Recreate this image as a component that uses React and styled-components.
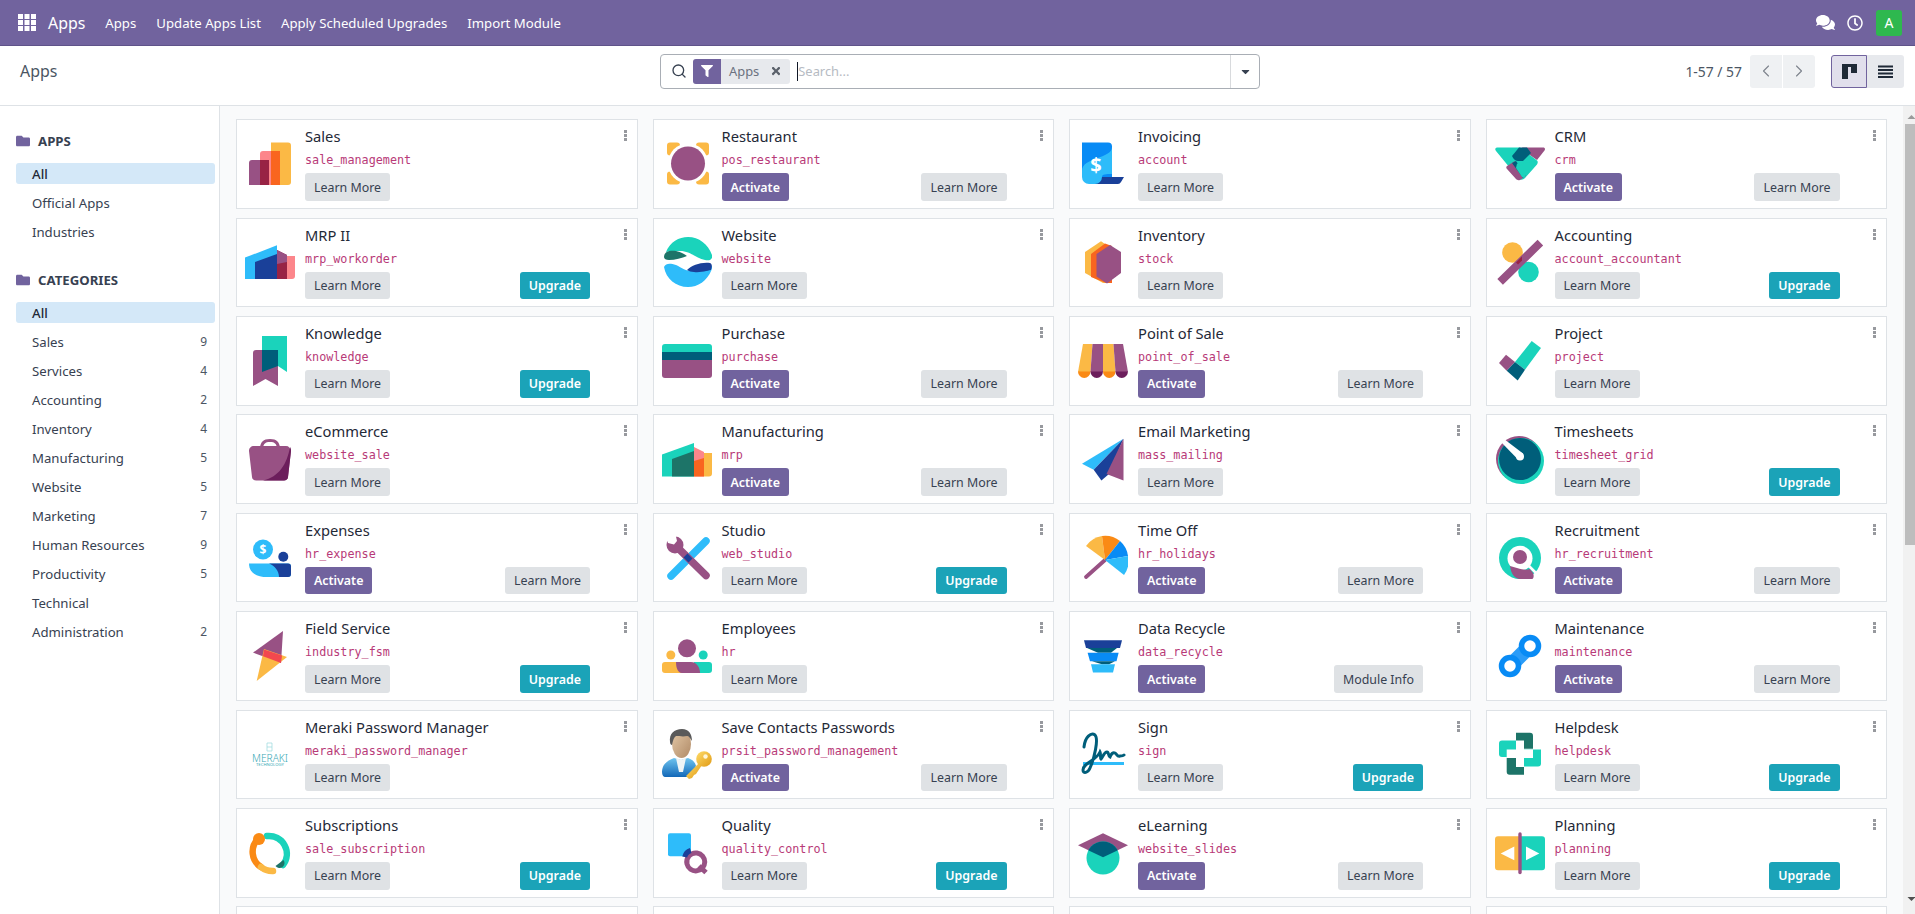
import React from "react";
import styled, { createGlobalStyle } from "styled-components";
import { FaComments, FaRegClock, FaFilter, FaTimes, FaFolder, FaCaretDown } from "react-icons/fa";
import { ChevronLeft, ChevronRight, Search } from "lucide-react";

const C = {
  purple: "#985184",
  teal: "#1ad3bb",
  yellow: "#fbb945",
  orange: "#fa8a15",
  redorange: "#f9651f",
  pink: "#fc868b",
  wine: "#982344",
  sky: "#2ebcfa",
  blue: "#088bf5",
  navy: "#1a4099",
  deep: "#005e7a",
  moss: "#1d7468",
  plum: "#6c1e5c",
};

const Global = createGlobalStyle`
  * { box-sizing: border-box; }
  html, body { margin: 0; height: 100%; overflow: hidden; }
  body { font-family: "Noto Sans", sans-serif; font-size: 13.2px; color: #374151; background: #fff; }
`;

const Page = styled.div`
  display: flex;
  flex-direction: column;
  height: 100vh;
`;

const Navbar = styled.header`
  flex: 0 0 46px;
  display: flex;
  align-items: center;
  background: #71639e;
  border-bottom: 1px solid #5f5389;
  color: #fff;
  padding: 0 13px 0 18px;
`;

const AppsGrid = styled.svg`
  width: 18px;
  height: 17px;
  margin-right: 12px;
  fill: #fff;
`;

const Brand = styled.span`
  font-size: 15.9px;
  margin-right: 20px;
`;

const NavMenu = styled.nav`
  display: flex;
  gap: 20px;
`;

const NavLink = styled.span`
  font-size: 13.2px;
  color: #fff;
`;

const NavRight = styled.div`
  margin-left: auto;
  display: flex;
  align-items: center;
`;

const NavIcon = styled.span`
  display: flex;
  color: #fff;
  margin-right: ${(p) => p.$gap}px;
  font-size: ${(p) => p.$size}px;
`;

const Avatar = styled.span`
  width: 26px;
  height: 26px;
  border-radius: 3px;
  background: #2eb84f;
  color: #fff;
  font-size: 14px;
  display: flex;
  align-items: center;
  justify-content: center;
`;

const ControlPanel = styled.div`
  flex: 0 0 60px;
  display: grid;
  grid-template-columns: 660px 600px 1fr;
  align-items: center;
  background: #fff;
  border-bottom: 1px solid #dee2e6;
  padding: 0 11px 9px 0;
`;

const PageTitle = styled.h1`
  margin: 0 0 0 20px;
  font-size: 15.9px;
  font-weight: 400;
  color: #4b5563;
`;

const SearchBox = styled.div`
  height: 35px;
  display: flex;
  align-items: center;
  border: 1px solid #a9aeb5;
  border-radius: 4px;
  padding-left: 10px;
  color: #374151;
`;

const Facet = styled.div`
  display: flex;
  height: 25px;
  margin-left: 6px;
  border-radius: 3px;
  background: #e7e9ed;
  overflow: hidden;
`;

const FacetIcon = styled.span`
  width: 28px;
  background: #71639e;
  color: #fff;
  font-size: 12px;
  display: flex;
  align-items: center;
  justify-content: center;
`;

const FacetLabel = styled.span`
  display: flex;
  align-items: center;
  gap: 11px;
  padding: 0 8px 0 8px;
  color: #6b7280;
  font-size: 12.9px;
  & svg { font-size: 12px; color: #5b616b; }
`;

const Caret = styled.span`
  width: 1px;
  height: 19px;
  background: #111827;
  margin-left: 7px;
`;

const SearchInput = styled.input`
  flex: 1;
  min-width: 0;
  border: 0;
  outline: 0;
  background: transparent;
  font: 12.9px "Noto Sans", sans-serif;
  padding: 0;
  &::placeholder { color: #b6bbc3; opacity: 1; }
`;

const SearchCaret = styled.button`
  width: 29px;
  height: 100%;
  padding: 0;
  border: 0;
  border-left: 1px solid #d8dadd;
  background: transparent;
  color: #374151;
  font-size: 13px;
  display: flex;
  align-items: center;
  justify-content: center;
`;

const CpRight = styled.div`
  display: flex;
  align-items: center;
  justify-content: flex-end;
`;

const PagerText = styled.span`
  font-size: 13.9px;
  color: #4b5563;
  margin-right: 8px;
`;

const PagerGroup = styled.div`
  display: flex;
  gap: 1px;
  margin-right: 16px;
`;

const PagerButton = styled.button`
  width: 32px;
  height: 33px;
  padding: 0;
  border: 0;
  border-radius: ${(p) => (p.$end ? "0 3px 3px 0" : "3px 0 0 3px")};
  background: #eff1f3;
  color: #7c828c;
  display: flex;
  align-items: center;
  justify-content: center;
`;

const ViewButton = styled.button`
  width: ${(p) => (p.$active ? 36 : 37)}px;
  height: 33px;
  padding: 0;
  border: ${(p) => (p.$active ? "1px solid #71639e" : "0")};
  border-radius: ${(p) => (p.$active ? "3px 0 0 3px" : "0 3px 3px 0")};
  background: ${(p) => (p.$active ? "#e1dfec" : "#e7e9ed")};
  display: flex;
  align-items: center;
  justify-content: center;
`;

const GlyphSvg = styled.svg`
  width: 15px;
  height: 15px;
  fill: #1f2937;
`;

const Body = styled.div`
  flex: 1;
  min-height: 0;
  display: flex;
`;

const Sidebar = styled.aside`
  flex: 0 0 220px;
  background: #fff;
  border-right: 1px solid #dee2e6;
  padding: 25px 4px 0 16px;
`;

const SideHeader = styled.div`
  display: flex;
  align-items: center;
  gap: 8px;
  height: 20px;
  margin-bottom: 12px;
  font-size: 13.2px;
  font-weight: 700;
  color: #374151;
  & svg { color: #71639e; font-size: 14px; }
`;

const SideList = styled.ul`
  list-style: none;
  margin: 0 0 ${(p) => p.$after || 0}px;
  padding: 0;
  display: flex;
  flex-direction: column;
  gap: 8px;
`;

const SideItem = styled.li`
  height: 21px;
  padding: 0 8px 0 16px;
  display: flex;
  align-items: center;
  justify-content: space-between;
  border-radius: 3px;
  font-size: 13.2px;
  font-weight: ${(p) => (p.$active ? 500 : 400)};
  color: ${(p) => (p.$active ? "#1f2937" : "#374151")};
  background: ${(p) => (p.$active ? "#d4e8f8" : "transparent")};
`;

const Count = styled.span`
  font-size: 12px;
  color: #4b5563;
`;

const Main = styled.main`
  flex: 1;
  min-width: 0;
  overflow: hidden;
  background: #f9fafb;
  padding: 13.3px 16px 0;
`;

const ScrollRail = styled.div`
  flex: 0 0 12px;
  display: flex;
  flex-direction: column;
  background: #f1f1f1;
  padding-left: 2px;
`;

const ScrollArrow = styled.svg`
  flex: 0 0 18px;
  width: 10px;
  height: 18px;
  margin-top: ${(p) => (p.$bottom ? "auto" : 0)};
  fill: ${(p) => (p.$bottom ? "#505050" : "#9a9a9a")};
`;

const ScrollThumb = styled.div`
  height: 421px;
  background: #bdbdbd;
`;

const Grid = styled.div`
  display: grid;
  grid-template-columns: repeat(4, 1fr);
  column-gap: 15px;
  row-gap: 8.9px;
  grid-auto-rows: 89.5px;
`;

const Card = styled.article`
  position: relative;
  display: flex;
  align-items: center;
  background: #fff;
  border: 1px solid #dee2e6;
  padding-left: 8px;
`;

const Logo = styled.svg`
  flex: 0 0 50px;
  width: 50px;
  height: 50px;
  margin-right: 10px;
`;

const CardText = styled.div`
  align-self: flex-start;
  padding-top: 6px;
  width: 285px;
`;

const CardTitle = styled.div`
  font-size: 14.7px;
  line-height: 20px;
  color: #1f2937;
  white-space: nowrap;
`;

const ModuleCode = styled.code`
  display: block;
  margin-top: 5px;
  font-family: "DejaVu Sans Mono", monospace;
  font-size: 11.75px;
  line-height: 18px;
  color: #b83a78;
  white-space: nowrap;
`;

const Buttons = styled.div`
  display: flex;
  justify-content: space-between;
  margin-top: 4px;
`;

const variantBg = { primary: "#71639e", upgrade: "#1ba3b8", secondary: "#dfe2e5" };

const Btn = styled.button`
  height: 27.5px;
  padding: 0 9px;
  border: 0;
  border-radius: 3px;
  font: ${(p) => (p.$variant === "secondary" ? 400 : 600)} 12.4px "Noto Sans", sans-serif;
  color: ${(p) => (p.$variant === "secondary" ? "#374151" : "#fff")};
  background: ${(p) => variantBg[p.$variant]};
`;

const Kebab = styled.span`
  position: absolute;
  top: 10px;
  right: 10px;
  width: 3px;
  height: 11px;
  background-image: radial-gradient(circle at 1.5px 1.5px, #97999e 1.5px, transparent 1.6px);
  background-size: 3px 4px;
`;

/* App icons */
const Sales = () => (
  <Logo viewBox="0 0 50 50">
    <path d="M4 24a3 3 0 013-3h17v25H4z" fill={C.purple} />
    <path d="M15 15a3 3 0 013-3h17v34H15z" fill={C.pink} />
    <path d="M15 21h9v25h-9z" fill={C.wine} />
    <path d="M26 3.5h17a3 3 0 013 3V43a3 3 0 01-3 3H26z" fill={C.yellow} />
    <path d="M26 12h9v34h-9z" fill={C.redorange} />
  </Logo>
);
const Restaurant = () => (
  <Logo viewBox="0 0 50 50">
    <rect x="5" y="3.5" width="13" height="13" rx="3" fill={C.yellow} />
    <rect x="34" y="3.5" width="13" height="13" rx="3" fill={C.yellow} />
    <rect x="5" y="32.500" width="13" height="13" rx="3" fill={C.yellow} />
    <rect x="34" y="32.500" width="13" height="13" rx="3" fill={C.yellow} />
    <circle cx="26" cy="24.5" r="20" fill="#fff" />
    <circle cx="26" cy="24.5" r="17" fill={C.purple} />
  </Logo>
);
const Invoicing = () => (
  <Logo viewBox="0 0 50 50">
    <path d="M12 38h34l-3 5a4 4 0 01-3 2H12z" fill={C.navy} />
    <path d="M4 3.5h26a4 4 0 014 4V38H4z" fill={C.blue} />
    <path d="M34 8c0 12-30 10-30 24v6a7 7 0 007 7h6a7 7 0 007-7c0-3 4-3 10-3z" fill={C.sky} />
    <text x="18" y="33" textAnchor="middle" fontFamily="Noto Sans" fontWeight="700" fontSize="20" fill="#fff">$</text>
  </Logo>
);
const Crm = () => (
  <Logo viewBox="0 0 50 50">
    <path d="M27 8.5h21c2 0 2.5 1.5 1.5 3L42 21 29 12z" fill={C.purple} />
    <path d="M2 8.5h23l17 13c1 1 1 2 0 4L30 39c-2 2-4 2-6 1L1 12c-1.5-1.500-.5-3.500 1-3.500z" fill={C.teal} />
    <path d="M24 8.500h8L36 14 28 22l-5 0c-2 0-5-2-6-5z" fill={C.deep} />
    <path d="M12 27l8-5 11 15-6 4c-2 .5-3 0-4-1l-9-10c-1-1-1-2 0-3z" fill={C.purple} />
    <path d="M17 24l4-2 10 14-3 3z" fill={C.deep} />
    <path d="M22 24.500h5l14-2.500-12 17-2-1-6-9z" fill={C.teal} />
  </Logo>
);
const MrpII = () => (
  <Logo viewBox="0 0 50 50">
    <path d="M0 20.600L32 8.300V42H0z" fill={C.sky} />
    <path d="M10 25L32 17V42H10z" fill={C.navy} />
    <path d="M32 13l10 5v24H32z" fill={C.wine} />
    <path d="M32 13l10 5v7l-10 2z" fill={C.purple} />
    <path d="M42 19l8 0v20a3 3 0 01-3 3h-5z" fill={C.pink} />
  </Logo>
);
const Website = () => (
  <Logo viewBox="0 0 50 50">
    <path d="M4 15C8 5 17 0 26 0c11 0 20 7 24 18 1 4-2 6-7 5-9-2-15-9-25-9-6 0-11 0-14 1z" fill={C.teal} />
    <path d="M2 20c0-5 5-7 12-6 5 1 10 4 11 5-5 2-12 4-18 4-3 0-5-1-5-3z" fill={C.moss} />
    <path d="M2 30c2-4 6-4 12-2 6 3 10 6 16 6 7-1 14-5 18-6 2 0 2.500 2 1.500 5C45 44 36 50 26 50 14 50 4 42 2 30z" fill={C.sky} />
    <path d="M25 33c5-5 14-8 23-7 2.500 1 2 4 1 7-1 0-10 3-17 2-3 0-5-1-7-2z" fill={C.navy} />
  </Logo>
);
const Inventory = () => (
  <Logo viewBox="0 0 50 50">
    <path d="M7 15L23 4.300 30 9v37h-5L7 36z" fill={C.yellow} />
    <path d="M13 17L27 6.500 34 9v37h-6L13 40z" fill={C.redorange} />
    <path d="M18.500 17L32 8l11 7v21l-14 10.500-10.500-7z" fill={C.purple} />
  </Logo>
);
const Accounting = () => (
  <Logo viewBox="0 0 50 50">
    <circle cx="17.500" cy="15.500" r="10.300" fill={C.yellow} />
    <circle cx="33.500" cy="35" r="10.300" fill={C.teal} />
    <path d="M42.500 8.500L8 42" stroke={C.purple} strokeWidth="8" strokeLinecap="square" />
    <path d="M21 25.500l6-6 0 4-4 4z" fill={C.wine} />
  </Logo>
);
const Knowledge = () => (
  <Logo viewBox="0 0 50 50">
    <path d="M17 0h25v36l-9-6-16 6z" fill={C.teal} />
    <path d="M8 17a3 3 0 013-3h22v36l-12.500-7L8 50z" fill={C.purple} />
    <path d="M17 14h16v16l-16 6z" fill={C.deep} />
  </Logo>
);
const Purchase = () => (
  <Logo viewBox="0 0 50 50">
    <path d="M0 11a3 3 0 013-3h44a3 3 0 013 3v5H0z" fill={C.teal} />
    <path d="M0 16h50v8H0z" fill={C.deep} />
    <path d="M0 24h50v15a3 3 0 01-3 3H3a3 3 0 01-3-3z" fill={C.purple} />
  </Logo>
);
const PointOfSale = () => (
  <Logo viewBox="0 0 50 50">
    <path d="M5 8h9.500L12.500 36H0z" fill={C.yellow} />
    <path d="M14.500 8H25v28H12.500z" fill={C.purple} />
    <path d="M25 8h10.500l2 28H25z" fill={C.yellow} />
    <path d="M35.500 8H45l5 28H37.500z" fill={C.purple} />
    <path d="M0 35.500h12.500a6.250 6.500 0 01-12.500 0z" fill={C.orange} />
    <path d="M12.500 35.500H25a6.250 6.500 0 01-12.500 0z" fill={C.plum} />
    <path d="M25 35.500h12.500a6.250 6.500 0 01-12.500 0z" fill={C.orange} />
    <path d="M37.500 35.500H50a6.250 6.500 0 01-12.500 0z" fill={C.plum} />
  </Logo>
);
const Project = () => (
  <Logo viewBox="0 0 50 50">
    <path d="M36.700 5L46 12 30 33.700 20 26z" fill={C.teal} />
    <path d="M4 27l7-8.300L20 26l-8.300 8.700z" fill={C.purple} />
    <path d="M20 26l10 7.700-7.300 10.700-11-9.700z" fill={C.deep} />
  </Logo>
);
const ECommerce = () => (
  <Logo viewBox="0 0 50 50">
    <path d="M15 13c1-5 3-8 10-8s9 3 10 8h-3c-1-3-2-5-7-5s-6 2-7 5z" fill={C.purple} />
    <path d="M9 12h32c3 0 4 2 5 5l-3 26c0 2-2 3.500-4 3.500H11c-2 0-4-1.500-4-3.500L4 17c0-3 2-5 5-5z" fill={C.purple} />
    <path d="M45 13c1 1 1 3 1 4l-3 26c0 2-2 3.500-4 3.500H18C34 43 42 30 45 13z" fill={C.plum} />
  </Logo>
);
const Manufacturing = () => (
  <Logo viewBox="0 0 50 50">
    <path d="M0 20.500L32 9v33.400H0z" fill={C.teal} />
    <path d="M10 25L32 17v25.400H10z" fill={C.moss} />
    <path d="M32 13l10 5v24.400H32z" fill={C.pink} />
    <path d="M32 27l10-3v18.400H32z" fill={C.redorange} />
    <path d="M42 19h8v20.400a3 3 0 01-3 3h-5z" fill={C.yellow} />
  </Logo>
);
const EmailMarketing = () => (
  <Logo viewBox="0 0 50 50">
    <path d="M45.500 4.700L4 29.700l11.700 6z" fill={C.sky} />
    <path d="M45.500 4.700L15.700 35.700l7.700 10.700 7-6z" fill={C.navy} />
    <path d="M45.500 4.700L28.500 40l17 6.400z" fill={C.purple} />
  </Logo>
);
const Timesheets = () => (
  <Logo viewBox="0 0 50 50">
    <circle cx="24" cy="25" r="23" fill={C.purple} />
    <circle cx="26" cy="27" r="23" fill={C.teal} />
    <circle cx="25" cy="25" r="21" fill={C.deep} />
    <path d="M6 8l3-3 19 14.500-5 6z" fill="#fff" />
    <circle cx="25" cy="22.500" r="4" fill="#fff" />
  </Logo>
);
const Expenses = () => (
  <Logo viewBox="0 0 50 50">
    <circle cx="18" cy="16.500" r="10" fill={C.sky} />
    <text x="18" y="21" textAnchor="middle" fontFamily="Noto Sans" fontWeight="700" fontSize="12" fill="#fff">$</text>
    <circle cx="38.300" cy="23.700" r="5" fill={C.navy} />
    <path d="M4 30.500h39a3 3 0 013 3V41a3 3 0 01-3 3H22C12 44 4 40 4 30.500z" fill={C.sky} />
    <path d="M24 30.500h19a3 3 0 013 3V41a3 3 0 01-3 3h-9c0-6-4-11-10-13.500z" fill={C.navy} />
  </Logo>
);
const Studio = () => (
  <Logo viewBox="0 0 50 50">
    <path d="M44 8L9 43" stroke={C.sky} strokeWidth="7.500" strokeLinecap="round" />
    <path d="M15 14L44 42.500" stroke={C.purple} strokeWidth="7.500" strokeLinecap="round" />
    <circle cx="13" cy="12" r="8.500" fill={C.purple} />
    <path d="M3 1.500h10.500L15 8l-3 3.500L6 10z" fill="#fff" />
    <path d="M21.500 24.500l4-4 5 5-4 4z" fill={C.navy} />
  </Logo>
);
const TimeOff = () => (
  <Logo viewBox="0 0 50 50">
    <path d="M27 27L8 44" stroke={C.purple} strokeWidth="3.800" strokeLinecap="round" />
    <path d="M8 13a24 24 0 0116-10l3 24z" fill={C.yellow} />
    <path d="M24 3a24 24 0 0118 5L27 27z" fill={C.orange} />
    <path d="M42 8a24 24 0 018 15L27 27z" fill={C.blue} />
    <path d="M50 23a24 24 0 01-4 19L27 27z" fill={C.sky} />
  </Logo>
);
const Recruitment = () => (
  <Logo viewBox="0 0 50 50">
    <circle cx="25" cy="25" r="21" fill={C.teal} />
    <circle cx="25" cy="25.300" r="12.500" fill="#fff" />
    <circle cx="25" cy="24" r="7" fill={C.purple} />
    <path d="M15 33l7 2c6 2 10 2 13 1l3 4c1 2 1 6-1 6H25c-5 0-9-5-10-13z" fill={C.purple} />
    <path d="M34 33l8 8" stroke="#fff" strokeWidth="2.500" />
  </Logo>
);
const FieldService = () => (
  <Logo viewBox="0 0 50 50">
    <path d="M38 0L8 21.600 36 32z" fill={C.purple} />
    <path d="M42 26L19 18 11.700 50z" fill={C.yellow} />
    <path d="M19 18.500l18 6-1 7.500-18-6.700z" fill="#f2484f" />
  </Logo>
);
const Employees = () => (
  <Logo viewBox="0 0 50 50">
    <circle cx="25" cy="17.300" r="9" fill={C.purple} />
    <circle cx="8.800" cy="24" r="4.500" fill={C.yellow} />
    <circle cx="41.200" cy="24" r="4.500" fill={C.teal} />
    <path d="M3 31h15l8 11H3a3 3 0 01-3-3v-5a3 3 0 013-3z" fill={C.yellow} />
    <path d="M32 31h15a3 3 0 013 3v5a3 3 0 01-3 3H28z" fill={C.teal} />
    <path d="M14 31h15c6 0 9 6 9 11H20c-5 0-6-7-6-11z" fill={C.purple} />
  </Logo>
);
const DataRecycle = () => (
  <Logo viewBox="0 0 50 50">
    <path d="M6 9.300h38l-2 7.700H8z" fill={C.navy} />
    <path d="M9 17h30l-6 4.700H20z" fill={C.deep} />
    <path d="M9.600 21.700h31L38.500 30.300H12z" fill={C.blue} />
    <path d="M14 30.300h23l-6 3H24z" fill={C.deep} />
    <path d="M13 33.300h24l-2 8.300H15z" fill={C.sky} />
  </Logo>
);
const Maintenance = () => (
  <Logo viewBox="0 0 50 50">
    <path d="M29 13l8 8-16 16-8-8z" fill={C.sky} />
    <path d="M14.500 25L25 14.500l10.500 10.500L25 35.500z" fill="#2a9cf8" />
    <circle cx="35" cy="15" r="8.500" fill="#fff" stroke={C.blue} strokeWidth="5.500" />
    <circle cx="15" cy="35" r="8.500" fill="#fff" stroke={C.blue} strokeWidth="5.500" />
  </Logo>
);
const Meraki = () => (
  <Logo viewBox="0 0 50 50">
    <path d="M22 14h5v8h-5zM22 18h5" fill="none" stroke="#9ad9dc" strokeWidth=".7" />
    <text x="25" y="33" textAnchor="middle" fontFamily="Noto Sans" fontSize="10.500" fontWeight="300" fill="#39a9b5" textLength="36" lengthAdjust="spacingAndGlyphs">MERAKI</text>
    <text x="25" y="37" textAnchor="middle" fontFamily="Noto Sans" fontSize="3" fill="#39a9b5" textLength="28" lengthAdjust="spacingAndGlyphs">TECHNOLOGY</text>
  </Logo>
);
const SaveContacts = () => (
  <Logo viewBox="0 0 50 50">
    <defs>
      <linearGradient id="shirt" x1="0" y1="0" x2="0" y2="1">
        <stop offset="0" stopColor="#6fc4ef" />
        <stop offset="1" stopColor="#1268b8" />
      </linearGradient>
      <linearGradient id="face" x1="0" y1="0" x2="1" y2="1">
        <stop offset="0" stopColor="#e4c9a8" />
        <stop offset="1" stopColor="#b08a66" />
      </linearGradient>
      <linearGradient id="gold" x1="0" y1="0" x2="1" y2="1">
        <stop offset="0" stopColor="#ffdc6a" />
        <stop offset="1" stopColor="#e09a14" />
      </linearGradient>
    </defs>
    <path d="M0 44c0-9 5-12 12-15l7 2 7-2c5 2 7 4 8 8l-6 11H4c-3 0-4-2-4-6z" fill="url(#shirt)" />
    <path d="M14 29l5 2 5-2-3 14h-4z" fill="#eef4f6" />
    <ellipse cx="19.500" cy="15" rx="9.500" ry="14" fill="url(#face)" />
    <path d="M8 13C7 5 12 0 20 0c7 0 10 5 10 12-2-3-3-5-5-5-4 1-8 0-11 0-2 1-3 4-4 9-1 0-2-1-2-3z" fill="#5a5a5a" />
    <path d="M37 34L24 47l3 3 3-1 2-3 2-1 6-9z" fill="url(#gold)" />
    <circle cx="42" cy="30" r="7.800" fill="url(#gold)" />
    <circle cx="43.500" cy="27.500" r="2.200" fill="#fff6d8" />
  </Logo>
);
const Sign = () => (
  <Logo viewBox="0 0 50 50">
    <path d="M5 33h41v3H5z" fill={C.sky} />
    <path d="M6 18C7 8 13 3 17 6c4 4-1 24-5 33-2 5-7 6-7 2 0-7 13-9 17-18 1 2 0 6 1 7 2-2 3-7 6-7 2 0 1 4 3 5 1-3 3-5 5-4 2 1 2 4 5 3 1 0 3 0 4-1" fill="none" stroke={C.deep} strokeWidth="3" strokeLinecap="round" />
  </Logo>
);
const Helpdesk = () => (
  <Logo viewBox="0 0 50 50">
    <path d="M21 3.700h14a3 3 0 013 3V19.700H21z" fill={C.moss} />
    <path d="M11.700 28.700H29v17H14.700a3 3 0 01-3-3z" fill={C.moss} />
    <path d="M7 11.400h14V28H7a3 3 0 01-3-3V14.400a3 3 0 013-3z" fill={C.teal} />
    <path d="M29 20.400h17V34.400a3 3 0 01-3 3H29z" fill={C.teal} />
    <path d="M21 11.500h8v9h9v8.500h-9v9h-8v-9h-9.300v-8.500H21z" fill="#fff" />
  </Logo>
);
const Subscriptions = () => (
  <Logo viewBox="0 0 50 50">
    <path d="M22 8A18 18 0 0138 37" fill="none" stroke={C.teal} strokeWidth="6.500" strokeLinecap="round" />
    <path d="M38.500 32a5 5 0 11-8 6z" fill={C.moss} />
    <path d="M13 11A18 18 0 0016 39" fill="none" stroke={C.orange} strokeWidth="6.500" strokeLinecap="round" />
    <circle cx="14" cy="11" r="6" fill={C.orange} />
    <path d="M16 39a18 18 0 0012 4" fill="none" stroke={C.yellow} strokeWidth="6.500" strokeLinecap="round" />
  </Logo>
);
const Quality = () => (
  <Logo viewBox="0 0 50 50">
    <rect x="6" y="5.300" width="23" height="23" rx="2" fill={C.sky} />
    <path d="M37 38l7 6.500" stroke={C.purple} strokeWidth="5" />
    <path d="M25 36a9 9 0 0110-11 9 9 0 11-10 11z" fill="none" stroke={C.purple} strokeWidth="5" />
    <path d="M22.700 29a9 9 0 016-6.500" fill="none" stroke={C.navy} strokeWidth="5" />
  </Logo>
);
const ELearning = () => (
  <Logo viewBox="0 0 50 50">
    <defs>
      <clipPath id="capClip"><ellipse cx="25" cy="30" rx="16.500" ry="16.500" /></clipPath>
    </defs>
    <path d="M25 5.300L50 17.300 25 29.300 0 17.300z" fill={C.purple} />
    <ellipse cx="25" cy="30" rx="16.500" ry="16.500" fill={C.teal} />
    <path d="M25 5.300L50 17.300 25 29.300 0 17.300z" fill={C.deep} clipPath="url(#capClip)" />
  </Logo>
);
const Planning = () => (
  <Logo viewBox="0 0 50 50">
    <path d="M3 8.300h21v34H3a3 3 0 01-3-3v-28a3 3 0 013-3z" fill={C.yellow} />
    <path d="M26 8.300h21a3 3 0 013 3v28a3 3 0 01-3 3H26z" fill={C.teal} />
    <path d="M19.300 18.600v13.700L5.700 25.400z" fill="#fff" />
    <path d="M31 18.600v13.700l13.300-6.900z" fill="#fff" />
    <rect x="23.300" y="4.300" width="3.400" height="42" rx="1.700" fill={C.purple} />
  </Logo>
);

const A = { label: "Activate", variant: "primary" };
const U = { label: "Upgrade", variant: "upgrade" };
const S = { label: "Learn More", variant: "secondary" };
const M = { label: "Module Info", variant: "secondary" };

const apps = [
  ["Sales", "sale_management", Sales, [S]],
  ["Restaurant", "pos_restaurant", Restaurant, [A, S]],
  ["Invoicing", "account", Invoicing, [S]],
  ["CRM", "crm", Crm, [A, S]],
  ["MRP II", "mrp_workorder", MrpII, [S, U]],
  ["Website", "website", Website, [S]],
  ["Inventory", "stock", Inventory, [S]],
  ["Accounting", "account_accountant", Accounting, [S, U]],
  ["Knowledge", "knowledge", Knowledge, [S, U]],
  ["Purchase", "purchase", Purchase, [A, S]],
  ["Point of Sale", "point_of_sale", PointOfSale, [A, S]],
  ["Project", "project", Project, [S]],
  ["eCommerce", "website_sale", ECommerce, [S]],
  ["Manufacturing", "mrp", Manufacturing, [A, S]],
  ["Email Marketing", "mass_mailing", EmailMarketing, [S]],
  ["Timesheets", "timesheet_grid", Timesheets, [S, U]],
  ["Expenses", "hr_expense", Expenses, [A, S]],
  ["Studio", "web_studio", Studio, [S, U]],
  ["Time Off", "hr_holidays", TimeOff, [A, S]],
  ["Recruitment", "hr_recruitment", Recruitment, [A, S]],
  ["Field Service", "industry_fsm", FieldService, [S, U]],
  ["Employees", "hr", Employees, [S]],
  ["Data Recycle", "data_recycle", DataRecycle, [A, M]],
  ["Maintenance", "maintenance", Maintenance, [A, S]],
  ["Meraki Password Manager", "meraki_password_manager", Meraki, [S]],
  ["Save Contacts Passwords", "prsit_password_management", SaveContacts, [A, S]],
  ["Sign", "sign", Sign, [S, U]],
  ["Helpdesk", "helpdesk", Helpdesk, [S, U]],
  ["Subscriptions", "sale_subscription", Subscriptions, [S, U]],
  ["Quality", "quality_control", Quality, [S, U]],
  ["eLearning", "website_slides", ELearning, [A, S]],
  ["Planning", "planning", Planning, [S, U]],
];

const categories = [
  ["All", null, true],
  ["Sales", 9],
  ["Services", 4],
  ["Accounting", 2],
  ["Inventory", 4],
  ["Manufacturing", 5],
  ["Website", 5],
  ["Marketing", 7],
  ["Human Resources", 9],
  ["Productivity", 5],
  ["Technical"],
  ["Administration", 2],
];

const AppCard = ({ title, code, Icon, buttons }) => (
  <Card>
    <Icon />
    <CardText>
      <CardTitle>{title}</CardTitle>
      <ModuleCode>{code}</ModuleCode>
      <Buttons>
        {buttons.map((b) => (
          <Btn key={b.label} $variant={b.variant}>{b.label}</Btn>
        ))}
      </Buttons>
    </CardText>
    <Kebab />
  </Card>
);

export default function App() {
  return (
    <Page>
      <Global />
      <Navbar>
        <AppsGrid viewBox="0 0 18 17">
          {[0, 6, 12].flatMap((y) =>
            [0, 6.5, 13].map((x) => <rect key={`${x}-${y}`} x={x} y={y} width="5" height="5" />)
          )}
        </AppsGrid>
        <Brand>Apps</Brand>
        <NavMenu>
          <NavLink>Apps</NavLink>
          <NavLink>Update Apps List</NavLink>
          <NavLink>Apply Scheduled Upgrades</NavLink>
          <NavLink>Import Module</NavLink>
        </NavMenu>
        <NavRight>
          <NavIcon $size={19} $gap={12}><FaComments /></NavIcon>
          <NavIcon $size={16} $gap={13}><FaRegClock /></NavIcon>
          <Avatar>A</Avatar>
        </NavRight>
      </Navbar>
      <ControlPanel>
        <PageTitle>Apps</PageTitle>
        <SearchBox>
          <Search size={16} strokeWidth={2} />
          <Facet>
            <FacetIcon><FaFilter /></FacetIcon>
            <FacetLabel>Apps <FaTimes /></FacetLabel>
          </Facet>
          <Caret />
          <SearchInput placeholder="Search..." />
          <SearchCaret><FaCaretDown /></SearchCaret>
        </SearchBox>
        <CpRight>
          <PagerText>1-57 / 57</PagerText>
          <PagerGroup>
            <PagerButton><ChevronLeft size={20} strokeWidth={1.3} /></PagerButton>
            <PagerButton $end><ChevronRight size={20} strokeWidth={1.3} /></PagerButton>
          </PagerGroup>
          <ViewButton $active>
            <GlyphSvg viewBox="0 0 15 15">
              <path d="M0 0h15v3H0zM0 3h6v12H0zM9 3h6v6H9z" />
            </GlyphSvg>
          </ViewButton>
          <ViewButton>
            <GlyphSvg viewBox="0 0 15 15">
              <path d="M0 1.500h15v2H0zM0 5h15v2H0zM0 8.500h15v2H0zM0 12h15v2H0z" />
            </GlyphSvg>
          </ViewButton>
        </CpRight>
      </ControlPanel>
      <Body>
        <Sidebar>
          <SideHeader><FaFolder />APPS</SideHeader>
          <SideList $after={28}>
            <SideItem $active>All</SideItem>
            <SideItem>Official Apps</SideItem>
            <SideItem>Industries</SideItem>
          </SideList>
          <SideHeader><FaFolder />CATEGORIES</SideHeader>
          <SideList>
            {categories.map(([name, count, active]) => (
              <SideItem key={name} $active={active}>
                {name}
                {count ? <Count>{count}</Count> : null}
              </SideItem>
            ))}
          </SideList>
        </Sidebar>
        <Main>
          <Grid>
            {apps.map(([title, code, Icon, buttons]) => (
              <AppCard key={code} title={title} code={code} Icon={Icon} buttons={buttons} />
            ))}
            <Card />
            <Card />
            <Card />
            <Card />
          </Grid>
        </Main>
        <ScrollRail>
          <ScrollArrow viewBox="0 0 10 18"><path d="M2.500 13h8l-4-4z" /></ScrollArrow>
          <ScrollThumb />
          <ScrollArrow $bottom viewBox="0 0 10 18"><path d="M2.500 1h8l-4 4z" /></ScrollArrow>
        </ScrollRail>
      </Body>
    </Page>
  );
}
